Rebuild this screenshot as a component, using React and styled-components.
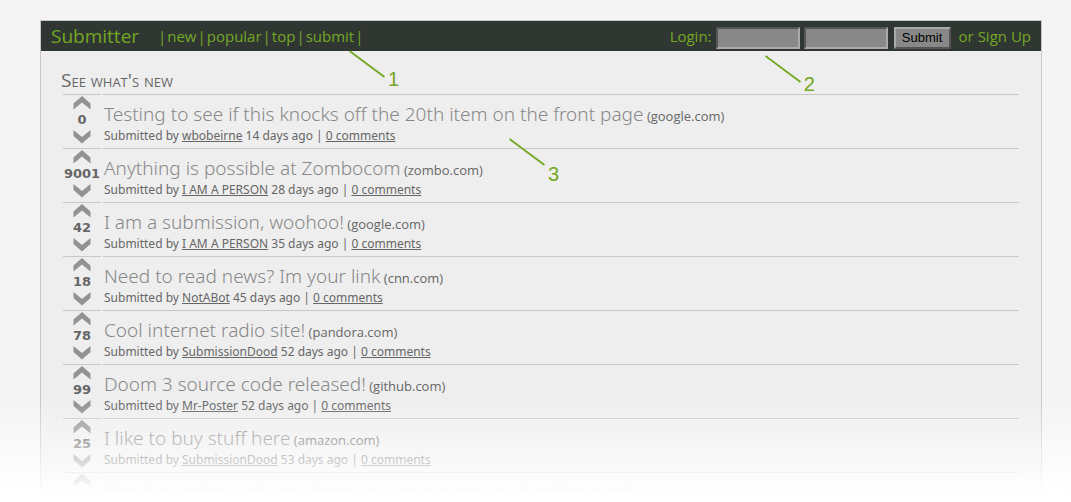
import React from 'react';
import styled, { createGlobalStyle } from 'styled-components';

const GlobalStyle = createGlobalStyle`
  * { box-sizing: border-box; }
  body {
    margin: 0;
    background: #f4f4f4;
    color: #666;
    font-family: "Open Sans", sans-serif;
    font-size: 13px;
  }
  a { color: inherit; }
`;

const Page = styled.div`
  position: relative;
  height: 100vh;
  overflow: hidden;
  padding: 20px 29px 0 40px;
`;

const Card = styled.div`
  min-height: 100%;
  background: #eee;
  border: 1px solid #c8c8c8;
`;

const Header = styled.header`
  display: flex;
  align-items: center;
  height: 30px;
  padding: 0 10px;
  background: #303733;
  color: #73a822;
  font-size: 15px;
  line-height: 30px;
  a { text-decoration: none; }
`;

const Brand = styled.a`
  width: 107px;
  font-size: 19px;
`;

const Nav = styled.nav`
  position: relative;
  display: flex;
  gap: 1px;
`;

const Login = styled.form`
  position: relative;
  display: flex;
  align-items: center;
  gap: 4px;
  margin-left: auto;
`;

const Field = styled.input`
  width: 84px;
  height: 22px;
  margin-top: 4px;
  padding: 1px 4px;
  background: #888;
  border: 2px solid;
  border-color: #555 #aaa #aaa #555;
  border-radius: 0;
`;

const SubmitButton = styled.button`
  width: 57px;
  height: 22px;
  margin: 4px 4px 0 2px;
  padding: 0;
  background: #888;
  border: 2px solid;
  border-color: #aaa #555 #555 #aaa;
  color: #000;
  font: 13px/18px "Liberation Sans", sans-serif;
`;

const CalloutBox = styled.span`
  position: absolute;
  z-index: 1;
  left: ${(p) => p.$x}px;
  top: ${(p) => p.$y}px;
  display: flex;
  gap: 3px;
  color: #73a822;
  font: 20px/20px "Liberation Sans", sans-serif;
  pointer-events: none;
`;

const CalloutNumber = styled.span`
  padding-top: ${(p) => (p.$low ? 26 : 19)}px;
`;

const Heading = styled.h1`
  margin: 0;
  padding: 16px 20px 0;
  height: 43px;
  font-size: 19px;
  line-height: 26px;
  font-weight: 400;
  font-variant: small-caps;
`;

const List = styled.ol`
  list-style: none;
  margin: 0;
  padding: 0 22px;
`;

const Row = styled.li`
  display: grid;
  grid-template-columns: 38px 1fr;
  column-gap: 2px;
  height: 54px;
`;

const Votes = styled.div`
  display: flex;
  flex-direction: column;
  align-items: center;
  padding-top: 1px;
  border-top: 1px solid #c8c8c8;
  font: bold 13px/20px "DejaVu Sans", sans-serif;
`;

const VoteButton = styled.button`
  display: block;
  height: 14px;
  padding: 0;
  border: 0;
  background: none;
  color: #929292;
  svg { display: block; }
`;

const Entry = styled.div`
  position: relative;
  padding: 6px 0 0 1px;
  border-top: 1px solid #c8c8c8;
  white-space: nowrap;
`;

const TitleLine = styled.div`
  line-height: 26px;
`;

const Title = styled.a`
  color: #888;
  font-family: "Noto Sans", sans-serif;
  font-size: 19px;
  font-weight: 300;
  text-decoration: none;
`;

const Meta = styled.div`
  font-family: "Noto Sans", sans-serif;
  font-size: 12px;
  line-height: 13px;
`;

const Fade = styled.div`
  position: absolute;
  z-index: 2;
  inset: auto 0 0;
  height: 102px;
  background: linear-gradient(rgba(255, 255, 255, 0), #fff 94px);
  pointer-events: none;
`;

function Callout({ x, y, low, children }) {
  return (
    <CalloutBox $x={x} $y={y}>
      <svg width="36" height="28" viewBox="0 0 36 28" aria-hidden="true">
        <path d="M0.5 1L35.5 27" stroke="#73a822" strokeWidth="2" />
      </svg>
      <CalloutNumber $low={low}>{children}</CalloutNumber>
    </CalloutBox>
  );
}

function Arrow({ down }) {
  return (
    <svg width="18" height="14" viewBox="0 0 18 14" aria-hidden="true">
      <path
        d={down ? 'M0.5 0L9 7L17.5 0V6L9 13.5L0.5 6Z' : 'M0.5 13.5L9 6.5L17.5 13.5V7.5L9 0L0.5 7.5Z'}
        fill="currentColor"
      />
    </svg>
  );
}

const sections = ['new', 'popular', 'top', 'submit'];

const items = [
  { votes: 0, title: 'Testing to see if this knocks off the 20th item on the front page', site: 'google.com', user: 'wbobeirne', days: 14 },
  { votes: 9001, title: 'Anything is possible at Zombocom', site: 'zombo.com', user: 'I AM A PERSON', days: 28 },
  { votes: 42, title: 'I am a submission, woohoo!', site: 'google.com', user: 'I AM A PERSON', days: 35 },
  { votes: 18, title: 'Need to read news? Im your link', site: 'cnn.com', user: 'NotABot', days: 45 },
  { votes: 78, title: 'Cool internet radio site!', site: 'pandora.com', user: 'SubmissionDood', days: 52 },
  { votes: 99, title: 'Doom 3 source code released!', site: 'github.com', user: 'Mr-Poster', days: 52 },
  { votes: 25, title: 'I like to buy stuff here', site: 'amazon.com', user: 'SubmissionDood', days: 53 },
  { votes: 33, title: 'Check out this website where you post what you had for lunch', site: 'twitter.com' },
];

export default function App() {
  return (
    <Page>
      <GlobalStyle />
      <Card>
        <Header>
          <Brand href="#home">Submitter</Brand>
          <Nav>
            <span>|</span>
            {sections.map((name) => (
              <React.Fragment key={name}>
                <a href={`#${name}`}>{name}</a>
                <span>|</span>
              </React.Fragment>
            ))}
            <Callout x={191} y={29}>1</Callout>
          </Nav>
          <Login onSubmit={(e) => e.preventDefault()}>
            <label htmlFor="username">Login:</label>
            <Field id="username" type="text" />
            <Field type="password" aria-label="Password" />
            <SubmitButton type="submit">Submit</SubmitButton>
            <span>or <a href="#signup">Sign Up</a></span>
            <Callout x={95} y={34}>2</Callout>
          </Login>
        </Header>
        <Heading>See what's new</Heading>
        <List>
          {items.map((item, i) => (
            <Row key={item.title}>
              <Votes>
                <VoteButton aria-label="Vote up"><Arrow /></VoteButton>
                <span>{item.votes}</span>
                <VoteButton aria-label="Vote down"><Arrow down /></VoteButton>
              </Votes>
              <Entry>
                <TitleLine>
                  <Title href="#item">{item.title}</Title> ({item.site})
                </TitleLine>
                {item.user && (
                  <Meta>
                    Submitted by <a href="#user">{item.user}</a> {item.days} days ago | <a href="#comments">0 comments</a>
                  </Meta>
                )}
                {i === 0 && <Callout x={406} y={43} low>3</Callout>}
              </Entry>
            </Row>
          ))}
        </List>
      </Card>
      <Fade />
    </Page>
  );
}
